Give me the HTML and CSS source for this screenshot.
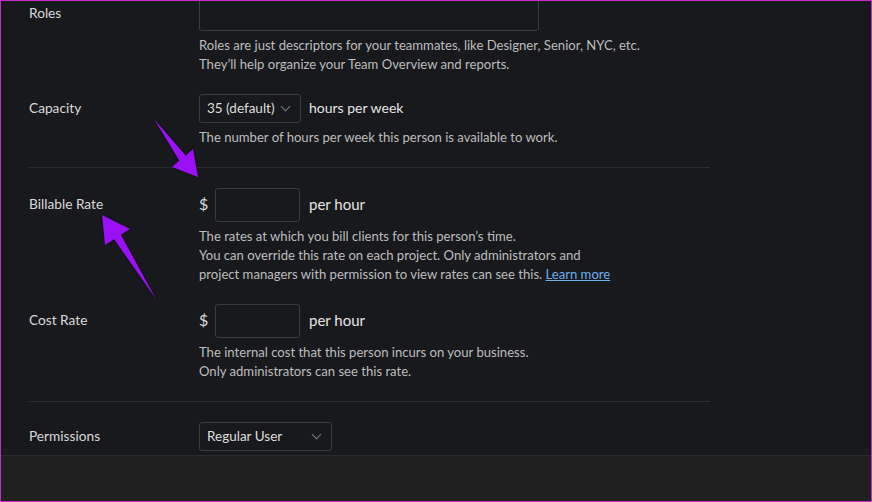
FILE: index.html
```html
<!DOCTYPE html>
<html lang="en">
<head>
  <meta charset="UTF-8" />
  <meta name="viewport" content="width=device-width, initial-scale=1.0"/>
  <title>Edit Person</title>
  <link rel="stylesheet" href="styles.css">
</head>
<body>
  <div class="frame">
    <div class="form">
      <div class="field">
        <label class="field-label">Roles</label>
        <div class="control"><input class="text-input wide" type="text" /></div>
        <p class="hint">Roles are just descriptors for your teammates, like Designer, Senior, NYC, etc.<br/>They’ll help organize your Team Overview and reports.</p>
      </div>

      <div class="field">
        <label class="field-label">Capacity</label>
        <div class="control">
          <div class="select capacity">35 (default) <span class="chev"></span></div>
          <span class="unit small">hours per week</span>
        </div>
        <p class="hint">The number of hours per week this person is available to work.</p>
      </div>

      <hr class="divider" />

      <div class="field">
        <label class="field-label">Billable Rate</label>
        <div class="control">
          <span class="currency">$</span>
          <input class="text-input rate" type="text" />
          <span class="unit">per hour</span>
        </div>
        <p class="hint">The rates at which you bill clients for this person’s time.<br/>You can override this rate on each project. Only administrators and<br/>project managers with permission to view rates can see this. <a href="#">Learn more</a></p>
      </div>

      <div class="field">
        <label class="field-label">Cost Rate</label>
        <div class="control">
          <span class="currency">$</span>
          <input class="text-input rate" type="text" />
          <span class="unit">per hour</span>
        </div>
        <p class="hint">The internal cost that this person incurs on your business.<br/>Only administrators can see this rate.</p>
      </div>

      <hr class="divider" />

      <div class="field last">
        <label class="field-label">Permissions</label>
        <div class="control">
          <div class="select permissions">Regular User <span class="chev"></span></div>
        </div>
      </div>
    </div>

    <div class="footer-bar"></div>

    <svg class="arrows" width="872" height="502" viewBox="0 0 872 502">
      <polygon points="154,119 185.7,155.6 193,149 198,177 172,167 179.3,160.4" />
      <polygon points="156,299 120.9,234.8 130,229 102,215 105,245 114.1,239.2" />
    </svg>
  </div>
</body>
</html>
```

FILE: styles.css
```css
* {
  box-sizing: border-box;
}
body {
  margin: 0;
  font-family: Lato, "Open Sans", sans-serif;
  background: #18191d;
}
.frame {
  position: relative;
  width: 872px;
  height: 502px;
  border: 1px solid #c72ccb;
  background: #18191d;
  overflow: hidden;
  display: flex;
  flex-direction: column;
}
.form {
  margin-top: -4px;
  padding-left: 28px;
  width: 709px;
  flex: 1;
}
.field {
  display: grid;
  grid-template-columns: 170px 1fr;
  align-items: center;
  padding-bottom: 20px;
}
.field.last {
  padding-bottom: 0;
}
.field-label {
  grid-column: 1;
  grid-row: 1;
  color: #d9d9d9;
  font-size: 13.7px;
  padding-bottom: 3px;
}
.control {
  grid-column: 2;
  grid-row: 1;
  display: flex;
  align-items: center;
}
.hint {
  grid-column: 2;
  grid-row: 2;
  margin: 5px 0 0;
  color: #bdbdbd;
  font-size: 13.1px;
  line-height: 19px;
}
.hint a {
  color: #6cb0ec;
}
.text-input {
  height: 34px;
  background: transparent;
  border: 1px solid #3b3c40;
  border-radius: 3px;
  color: #ddd;
}
.text-input.wide {
  width: 340px;
}
.text-input.rate {
  width: 85px;
  height: 34px;
}
.currency {
  color: #dcdcdc;
  font-size: 16px;
  width: 16px;
  padding-bottom: 3px;
}
.unit {
  color: #e4e4e4;
  font-size: 15px;
  margin-left: 9px;
  padding-bottom: 3px;
}
.unit.small {
  font-size: 14px;
  margin-left: 8px;
}
.select {
  height: 29px;
  border: 1px solid #3b3c40;
  border-radius: 3px;
  display: flex;
  align-items: center;
  justify-content: space-between;
  padding: 0 11px 2px 7px;
  color: #dedede;
  font-size: 13.5px;
}
.select.capacity {
  width: 102px;
}
.select.permissions {
  width: 133px;
}
.chev {
  width: 7px;
  height: 7px;
  border-right: 1.5px solid #7c7c7c;
  border-bottom: 1.5px solid #7c7c7c;
  transform: translateY(-1px) rotate(45deg);
}
.divider {
  border: 0;
  border-top: 1px solid #2c2d31;
  margin: 0 0 20px;
}
.footer-bar {
  height: 46px;
  background: #202020;
  border-top: 1px solid #2b2b2b;
}
.arrows {
  position: absolute;
  left: -1px;
  top: -1px;
  pointer-events: none;
}
.arrows polygon {
  fill: #9c10f7;
  filter: drop-shadow(0 0 1px rgba(0, 0, 0, 0.6));
}
```
